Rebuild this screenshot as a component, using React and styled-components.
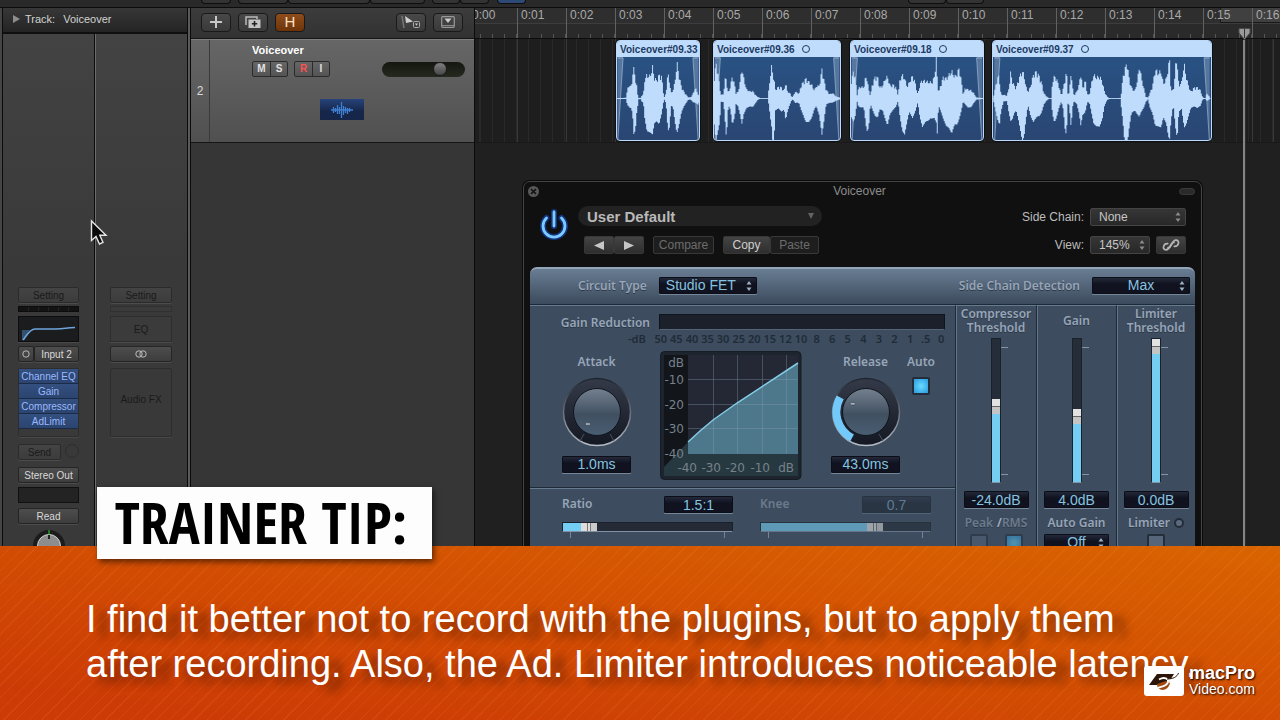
import React from "react";
import styled, { createGlobalStyle, css } from "styled-components";

const GlobalStyle = createGlobalStyle`
  *, *::before, *::after { box-sizing: border-box; }
  html, body { margin: 0; padding: 0; background: #1e1e1e; }
  body { font-family: "Liberation Sans", Arial, sans-serif; font-size: 12px; overflow: hidden; }
  button, input, select { font: inherit; color: inherit; margin: 0; padding: 0; }
  button { cursor: pointer; }
`;

const labelFont = `"Noto Sans", "Open Sans", sans-serif`;

/* ---------- page frame ---------- */

const Screen = styled.div`
  display: flex;
  flex-direction: column;
  height: 100vh;
  overflow: hidden;
`;

const Workspace = styled.div`
  position: relative;
  flex: 1;
  min-height: 0;
  overflow: hidden;
  display: flex;
  flex-direction: column;
  background: #202020;
`;

const TopStrip = styled.div`
  display: flex;
  flex: none;
  height: 8px;
  padding-left: 201px;
  background: #292929;
  border-bottom: 1px solid #0c0c0c;
`;

const TopChip = styled.span`
  flex: none;
  width: ${(p) => p.$w}px;
  height: 4px;
  margin-left: ${(p) => p.$gap || 0}px;
  background: ${(p) => (p.$on ? "#2c4a75" : "#333")};
  border: 1px solid #0e0e0e;
  border-top: 0;
  border-radius: 0 0 4px 4px;
`;

const Panes = styled.div`
  flex: 1;
  min-height: 0;
  display: grid;
  grid-template-columns: 190px 285px 1fr;
`;

/* ---------- inspector ---------- */

const Inspector = styled.aside`
  display: flex;
  flex-direction: column;
  background: #3b3b3b;
  border-left: 2px solid #454545;
  border-right: 2px solid #5a5a5a;
  box-shadow: inset 1px 0 #0b0b0b, inset -1px 0 #0b0b0b;
`;

const InspectorHead = styled.header`
  display: flex;
  align-items: center;
  gap: 5px;
  flex: none;
  height: 26px;
  margin: 0 1px;
  padding: 0 0 2px 10px;
  font-size: 11px;
  color: #d2d2d2;
  background: linear-gradient(#373737, #242424);
  border-bottom: 2px solid #0f0f0f;
`;

const HeadName = styled.span`
  margin-left: 3px;
`;

const Strips = styled.div`
  flex: 1;
  min-height: 0;
  display: grid;
  grid-template-columns: 92px 1fr;
  margin: 0 1px;
  background: linear-gradient(#434343, #393939 45%);
`;

const Strip = styled.section`
  display: flex;
  flex-direction: column;
  min-width: 0;
  padding: 253px 15px 0;
  font-size: 10px;
  color: #d6d6d6;
  ${(p) =>
    p.$first &&
    css`
      border-right: 1px solid #0c0c0c;
      box-shadow: 1px 0 #6c6c6c;
    `}
`;

const SlotButton = styled.button`
  flex: ${(p) => (p.$grow ? 1 : "none")};
  min-width: 0;
  width: ${(p) => (p.$w ? `${p.$w}px` : "auto")};
  height: 16px;
  margin-bottom: ${(p) => p.$after || 0}px;
  padding: 0;
  line-height: 13px;
  white-space: nowrap;
  color: ${(p) => (p.$dim ? "#1a1a1a" : "#dadada")};
  background: ${(p) => (p.$dim ? "linear-gradient(#444, #3c3c3c)" : "linear-gradient(#4d4d4d, #3d3d3d)")};
  border: 1px solid ${(p) => (p.$dim ? "#2b2b2b" : "#252525")};
  border-radius: 2px;
  box-shadow: 0 1px #4c4c4c;
`;

const MeterSlot = styled.div`
  height: 6px;
  margin-bottom: 4px;
  background: ${(p) => (p.$empty ? "#3b3b3b" : "repeating-linear-gradient(90deg, #131313 0 9px, #242424 9px 10px)")};
  border: 1px solid ${(p) => (p.$empty ? "#303030" : "#0c0c0c")};
`;

const EqThumb = styled.div`
  display: grid;
  place-items: center;
  height: 26px;
  margin-bottom: 4px;
  color: #1a1a1a;
  background: ${(p) => (p.$empty ? "#3b3b3b" : "#1b1c1e")};
  border: 1px solid ${(p) => (p.$empty ? "#2e2e2e" : "#0d0d0d")};
  box-shadow: 0 1px #4a4a4a;
`;

const Row = styled.div`
  display: flex;
  gap: ${(p) => p.$gap || 0}px;
  margin-bottom: ${(p) => p.$after || 0}px;
`;

const FxStack = styled.div`
  display: flex;
  flex-direction: column;
  height: 69px;
  margin-bottom: 7px;
  padding-bottom: ${(p) => (p.$empty ? 6 : 0)}px;
  color: #1a1a1a;
  border: 1px solid #2d2d2d;
  border-radius: 2px;
  box-shadow: 0 1px #484848;
  justify-content: ${(p) => (p.$empty ? "center" : "flex-start")};
  text-align: center;
`;

const FxButton = styled.button`
  height: 15px;
  padding: 0;
  line-height: 13px;
  white-space: nowrap;
  color: #9bb9ff;
  background: linear-gradient(#34507f, #2b4470);
  border: 0;
  border-bottom: 1px solid #1b2a46;
`;

const SendKnob = styled.span`
  flex: none;
  width: 14px;
  height: 14px;
  border: 1px solid #2d2d2d;
  border-radius: 50%;
`;

const GroupSlot = styled.div`
  height: 16px;
  margin: 4px 0 5px;
  background: #232323;
  border: 1px solid #101010;
`;

const PanWrap = styled.div`
  display: flex;
  justify-content: center;
  margin-top: 5px;
`;

/* ---------- track headers ---------- */

const TrackPane = styled.section`
  display: flex;
  flex-direction: column;
  background: #363636;
  border-left: 1px solid #0b0b0b;
  border-right: 1px solid #0b0b0b;
`;

const TrackTools = styled.div`
  display: flex;
  align-items: center;
  gap: 7px;
  flex: none;
  height: 31px;
  padding: 0 11px 2px 10px;
  background: linear-gradient(#3c3c3c, #323232);
  border-bottom: 1px solid #161616;
`;

const Spring = styled.span`
  flex: 1;
`;

const ToolButton = styled.button`
  display: grid;
  place-items: center;
  width: 30px;
  height: 19px;
  padding: 0;
  color: ${(p) => (p.$on ? "#ffe0c0" : "#c8c8c8")};
  font-size: 15px;
  line-height: 16px;
  background: ${(p) => (p.$on ? "linear-gradient(#8f4d1c, #6d3408)" : "linear-gradient(#484848, #3a3a3a)")};
  border: 1px solid #191919;
  border-radius: 4px;
`;

const TrackRow = styled.div`
  display: grid;
  grid-template-columns: 19px 1fr;
  height: 104px;
  color: #eee;
  background: linear-gradient(#666, #505050);
  border-top: 1px solid #808080;
  border-bottom: 1px solid #161616;
`;

const TrackNumber = styled.span`
  display: grid;
  place-items: center;
  border-right: 1px solid #3a3a3a;
  color: #dadada;
`;

const TrackBody = styled.div`
  display: flex;
  flex-direction: column;
  padding: 4px 9px 0 42px;
`;

const TrackName = styled.strong`
  font-size: 11px;
  line-height: 13px;
  color: #fff;
`;

const TrackControls = styled.div`
  display: flex;
  align-items: center;
  gap: 6px;
  margin-top: 4px;
`;

const Segments = styled.div`
  display: flex;
  background: linear-gradient(#666, #545454);
  border: 1px solid #2b2b2b;
  border-radius: 2px;
`;

const Segment = styled.button`
  width: 17px;
  height: 14px;
  padding: 0;
  font-size: 10px;
  font-weight: bold;
  line-height: 14px;
  color: ${(p) => (p.$rec ? "#ff5050" : "#e2e2e2")};
  background: none;
  border: 0;
  & + & {
    border-left: 1px solid #2b2b2b;
  }
`;

const Volume = styled.input`
  appearance: none;
  width: 83px;
  height: 15px;
  margin-left: auto;
  background: linear-gradient(#14170f, #262920);
  border-radius: 8px;
  &::-webkit-slider-thumb {
    appearance: none;
    width: 14px;
    height: 14px;
    border: 1px solid #1c1c1c;
    border-radius: 50%;
    background: linear-gradient(#808080, #464646);
  }
`;

const TrackIcon = styled.div`
  display: grid;
  place-items: center;
  width: 44px;
  height: 21px;
  margin: 22px 0 0 68px;
  background: linear-gradient(#26437a, #16264a 60%);
`;

/* ---------- timeline ---------- */

const Timeline = styled.section`
  min-width: 0;
  overflow: hidden;
  background: #202020;
`;

const Ruler = styled.div`
  position: relative;
  isolation: isolate;
  display: flex;
  height: 31px;
  overflow: hidden;
  background: linear-gradient(#2e2e2e 0 15px, #3d3d3d 15px 16px, #2a2a2a 16px);
  border-bottom: 1px solid #0d0d0d;
`;

const CycleRange = styled.div`
  position: absolute;
  z-index: -1;
  top: 0;
  right: 0;
  width: 60px;
  height: 15px;
  background: rgba(255, 255, 255, 0.09);
  border: solid #191919;
  border-width: 0 0 1px 1px;
`;

const RulerCell = styled.span`
  flex: none;
  width: 49px;
  padding: 1px 0 0 3px;
  font-size: 12px;
  line-height: 13px;
  color: #a9a9a9;
  border-left: 1px solid #626262;
  background: repeating-linear-gradient(90deg, transparent 0 11px, #555 11px 12px) 0 100% / 48px 4px no-repeat;
  &:first-child {
    margin-left: -7px;
  }
`;

const Lane = styled.div`
  display: flex;
  height: 104px;
  padding: 1px 0;
  background:
    repeating-linear-gradient(90deg, #383838 0 1px, transparent 1px 49px) -7px 0,
    repeating-linear-gradient(90deg, #292929 0 1px, transparent 1px 12px) 5px 0,
    #1e1e1e;
  border-bottom: 1px solid #191919;
`;

const Region = styled.article`
  flex: none;
  display: flex;
  flex-direction: column;
  width: ${(p) => p.$w}px;
  margin-left: ${(p) => p.$gap}px;
  overflow: hidden;
  background: linear-gradient(#285486, #2a4673);
  border: 1px solid #bcd9fa;
  border-radius: 4px;
  box-shadow: 0 0 0 1px #0d0f14;
`;

const RegionHead = styled.header`
  display: flex;
  align-items: center;
  gap: 7px;
  flex: none;
  height: 16px;
  padding-left: 3px;
  font-size: 10px;
  font-weight: bold;
  color: #1d3a63;
  white-space: nowrap;
  background: #bfdcfc;
`;

const LoopMark = styled.span`
  width: 8px;
  height: 8px;
  border: 1px solid #1d3a63;
  border-radius: 50%;
`;

const Playhead = styled.div`
  position: absolute;
  top: 28px;
  bottom: 0;
  left: 1238px;
  width: 13px;
  svg {
    display: block;
    width: 13px;
    height: 12px;
  }
  &::after {
    content: "";
    display: block;
    width: 3px;
    height: 100%;
    margin: 0 5px;
    background: #858585;
    border: solid #2c2c2c;
    border-width: 0 1px 0 0;
  }
`;

const Pointer = styled.svg`
  position: absolute;
  top: 219px;
  left: 90px;
`;

/* ---------- plug-in window ---------- */

const PluginWindow = styled.section`
  position: absolute;
  top: 181px;
  left: 523px;
  width: 679px;
  padding: 0 6px;
  background: #101010;
  border: 1px solid #444;
  border-radius: 7px 7px 0 0;
  box-shadow: 0 0 0 1px #0b0b0b;
`;

const TitleBar = styled.header`
  display: grid;
  grid-template-columns: 16px 1fr 16px;
  align-items: center;
  height: 18px;
  color: #8c8c8c;
  text-align: center;
`;

const WindowTitle = styled.span`
  padding-right: 6px;
`;

const CloseButton = styled.button`
  display: grid;
  place-items: center;
  width: 11px;
  height: 11px;
  margin-left: -2px;
  padding: 0;
  background: #595959;
  border: 0;
  border-radius: 50%;
`;

const Pill = styled.span`
  height: 7px;
  background: #2a2a2a;
  border: 1px solid #3a3a3a;
  border-radius: 4px;
`;

const PluginHead = styled.div`
  display: flex;
  height: 67px;
  padding: 6px 9px 0 9px;
`;

const PowerButton = styled.button`
  width: 32px;
  height: 36px;
  margin-right: 7px;
  padding: 0;
  background: none;
  border: 0;
  svg {
    display: block;
    margin-left: -1px;
  }
`;

const HeadColumn = styled.div`
  display: flex;
  flex-direction: column;
  gap: ${(p) => p.$gap}px;
  padding-top: ${(p) => p.$top || 0}px;
  margin-left: ${(p) => (p.$right ? "auto" : "0")};
`;

const SelectWrap = styled.div`
  position: relative;
  width: ${(p) => p.$w}px;
  svg {
    position: absolute;
    top: 50%;
    right: ${(p) => p.$inset || 5}px;
    transform: translateY(-50%);
    pointer-events: none;
  }
`;

const PresetSelect = styled.select`
  appearance: none;
  display: block;
  width: 100%;
  height: 20px;
  padding: 0 9px;
  font-size: 15px;
  font-weight: bold;
  color: #b9b9b9;
  background: #222;
  border: 0;
  border-radius: 10px;
`;

const ButtonRow = styled.div`
  display: flex;
  padding-left: 6px;
  gap: 9px;
`;

const Joined = styled.div`
  display: flex;
`;

const HeadButton = styled.button`
  display: grid;
  place-items: center;
  width: ${(p) => p.$w}px;
  height: 18px;
  padding: 0;
  line-height: 15px;
  color: ${(p) => (p.$dim ? "#6c6c6c" : "#cfcfcf")};
  background: ${(p) => (p.$dim ? "#1e1e1e" : "linear-gradient(#444, #2e2e2e)")};
  border: 1px solid #383838;
  border-radius: 2px;
`;

const Field = styled.div`
  display: flex;
  align-items: center;
  gap: 6px;
  color: #bdbdbd;
  label {
    width: 62px;
    text-align: right;
    white-space: nowrap;
  }
`;

const HeadSelect = styled.select`
  appearance: none;
  display: block;
  width: 100%;
  height: 18px;
  padding: 0 8px;
  color: #c6c6c6;
  background: linear-gradient(#363636, #282828);
  border: 1px solid #444;
  border-radius: 2px;
`;

const Body = styled.div`
  color: #97a5b8;
  font-family: ${labelFont};
  font-weight: 600;
  font-size: 12px;
  background: linear-gradient(#697d93, #3d4c5e 34px);
  border-top: 2px solid #93a5b8;
  border-radius: 7px 7px 0 0;
`;

const BodyTop = styled.div`
  display: flex;
  align-items: center;
  height: 36px;
  padding: 0 5px 2px 48px;
  gap: 12px;
  border-bottom: 1px solid #1d2a38;
  text-shadow: 0 1px #2d3947;
`;

const readout = css`
  font-family: "Liberation Sans", Arial, sans-serif;
  font-weight: normal;
  font-size: 14px;
  color: #86c3e0;
  background: linear-gradient(#23283a, #10131f 40%);
  border: 1px solid #0b0e16;
  border-radius: 1px;
  box-shadow: 0 1px #76869a;
`;

const BodySelect = styled.select`
  ${readout}
  appearance: none;
  display: block;
  width: 100%;
  height: 17px;
  padding: 0 ${(p) => (p.$center ? 12 : 6)}px;
  line-height: 15px;
  text-align-last: ${(p) => (p.$center ? "center" : "left")};
`;

const Readout = styled.input`
  ${readout}
  display: block;
  width: ${(p) => p.$w || 69}px;
  height: 17px;
  text-align: center;
  opacity: ${(p) => (p.$dim ? 0.4 : 1)};
`;

const Controls = styled.div`
  display: grid;
  grid-template-columns: 425px 81px 80px 1fr;
  height: 320px;
`;

const Main = styled.div`
  display: flex;
  flex-direction: column;
  border-top: 1px solid #667b90;
`;

const MeterRow = styled.div`
  display: flex;
  align-items: flex-start;
  justify-content: flex-end;
  gap: 9px;
  padding: 8px 10px 0 0;
  line-height: 17px;
  text-shadow: 0 1px #2d3947;
`;

const Meter = styled.div`
  width: 286px;
  height: 16px;
  background: #1b202b;
  border: 1px solid #10151d;
  border-bottom-color: #536478;
`;

const Scale = styled.div`
  display: grid;
  grid-template-columns: 25px repeat(19, 1fr);
  padding: 0 6px 0 98px;
  font-size: 11px;
  line-height: 16px;
  color: #202b38;
  text-align: center;
  white-space: nowrap;
  span:first-child {
    text-align: left;
  }
`;

const Dials = styled.div`
  display: grid;
  grid-template-columns: 97px 142px 97px 1fr;
  column-gap: 15px;
  height: 141px;
  padding: 4px 0 0 18px;
  border-bottom: 1px solid #1f2b38;
`;

const Dial = styled.div`
  display: flex;
  flex-direction: column;
  align-items: center;
  margin-top: 2px;
  line-height: 17px;
  svg {
    margin: 7px 0 9px;
  }
`;

const CheckBox = styled.input`
  appearance: none;
  display: block;
  width: 18px;
  height: 18px;
  background: #56657a;
  border: 2px solid #242d3a;
  border-radius: 2px;
  opacity: ${(p) => (p.$dim ? 0.5 : 1)};
  &:checked {
    background: radial-gradient(#69dcff, #2a98df);
  }
`;

const AutoBox = styled.div`
  display: flex;
  flex-direction: column;
  align-items: center;
  gap: 7px;
  width: 40px;
  margin: 2px 0 0 -28px;
  line-height: 17px;
`;

const LowRow = styled.div`
  display: grid;
  grid-template-columns: 171px 171px;
  column-gap: 27px;
  padding: 7px 0 0 32px;
  border-top: 1px solid #667b90;
`;

const LowControl = styled.div`
  color: ${(p) => (p.$dim ? "#6b7a8d" : "#97a5b8")};
`;

const LowHead = styled.div`
  display: flex;
  justify-content: space-between;
  line-height: 16px;
  margin-bottom: 9px;
`;

const HSlider = styled.input`
  appearance: none;
  display: block;
  width: 171px;
  height: 10px;
  opacity: ${(p) => (p.$dim ? 0.6 : 1)};
  background: linear-gradient(90deg, #74cdf3 ${(p) => p.$fill}%, #242b37 ${(p) => p.$fill}%);
  border: 1px solid #1a212c;
  border-bottom-color: #8190a2;
  &::-webkit-slider-thumb {
    appearance: none;
    width: 16px;
    height: 8px;
    background: linear-gradient(90deg, #ddd 6px, #777 6px 7px, #ddd 7px 9px, #777 9px 10px, #ccc 10px);
  }
`;

const Ticks = styled.div`
  height: 6px;
  margin: 0 8px;
  border: solid #76869a;
  border-width: 0 1px;
`;

const Column = styled.div`
  display: flex;
  flex-direction: column;
  align-items: center;
  border-left: 1px solid #1e2a37;
  border-top: 1px solid #667b90;
  box-shadow: inset 1px 0 #62768b;
  text-shadow: 0 1px #2d3947;
`;

const ColumnTitle = styled.label`
  display: grid;
  place-items: center;
  height: 30px;
  line-height: 14px;
  text-align: center;
`;

const FaderWrap = styled.div`
  width: 24px;
  height: 146px;
  margin: 2px 0 7px;
  padding: 0 7px;
  background: linear-gradient(#8494a7, #8494a7) 100% 9px / 8px 1px no-repeat,
    linear-gradient(#8494a7, #8494a7) 100% 136px / 8px 1px no-repeat;
`;

const Fader = styled.input`
  appearance: none;
  writing-mode: vertical-lr;
  direction: rtl;
  display: block;
  width: 10px;
  height: 145px;
  background: linear-gradient(0deg, #74cdf3 ${(p) => p.$fill}%, #252d38 ${(p) => p.$fill}%);
  border: 1px solid #19212c;
  border-bottom-color: #8494a7;
  &::-webkit-slider-thumb {
    appearance: none;
    width: 8px;
    height: 15px;
    background: linear-gradient(#e2e2e2 7px, #666 7px 8px, #c4c4c4 8px);
  }
`;

const FootLabel = styled.div`
  display: flex;
  align-items: center;
  gap: 4px;
  margin-top: 5px;
  line-height: 20px;
  white-space: nowrap;
  color: ${(p) => (p.$dim ? "#6c7b8f" : "#97a5b8")};
  b {
    margin-right: -4px;
    font-weight: 600;
    color: #a8b4c4;
  }
`;

const Lamp = styled.span`
  width: 10px;
  height: 10px;
  background: #5b6a7e;
  border: 2px solid #232c39;
  border-radius: 50%;
`;

const FootRow = styled.div`
  display: flex;
  gap: 17px;
  margin-top: 1px;
`;

/* ---------- tip banner ---------- */

const Banner = styled.footer`
  position: relative;
  flex: none;
  min-height: 174px;
  padding: 51px 86px 0;
  color: #fff;
  background:
    repeating-linear-gradient(135deg, transparent 0 8px, rgba(255, 150, 60, 0.13) 8px 9px),
    linear-gradient(to bottom left, rgba(218, 102, 0, 0.95), rgba(204, 55, 5, 0) 90%),
    #cc3b05;
`;

const TipTag = styled.h1`
  position: absolute;
  top: -59px;
  left: 97px;
  width: 335px;
  height: 72px;
  margin: 0;
  padding-right: 7px;
  font-family: "Open Sans Condensed", "Liberation Sans Narrow", "Liberation Sans", sans-serif;
  font-size: 58px;
  font-weight: bold;
  line-height: 70px;
  text-align: center;
  white-space: nowrap;
  color: #000;
  background: #fdfdfd;
  box-shadow: 2px 3px 6px rgba(0, 0, 0, 0.55);
`;

const TipText = styled.p`
  margin: 0;
  font-size: 38px;
  line-height: 45px;
  white-space: nowrap;
  text-shadow: 12px 6px 8px rgba(70, 20, 0, 0.65);
`;

const Brand = styled.a`
  position: absolute;
  right: 24px;
  bottom: 24px;
  display: flex;
  align-items: center;
  gap: 5px;
  color: #fff;
  text-decoration: none;
  text-shadow: 1px 1px 2px #000;
`;

const BrandName = styled.span`
  display: flex;
  flex-direction: column;
  width: 67px;
  font-size: 14px;
  line-height: 14px;
  strong {
    font-size: 18px;
    line-height: 17px;
  }
`;

/* ---------- data ---------- */

const regions = [
  {
    name: "Voiceover#09.33", gap: 141, width: 84, loop: false,
    env: [[0,1,1],[28,2,2],[31,25,22],[39,38,30],[44,30,30],[48,75,60],[51,82,104],[56,55,90],[60,35,40],[63,10,20],[66,2,2],[72,2,2],[76,10,10],[80,10,10],[84,52,50],[91,65,85],[98,60,88],[103,68,92],[108,86,98],[114,55,70],[121,50,68],[128,65,82],[136,60,50],[140,25,20],[143,2,2],[149,15,15],[152,55,60],[155,66,95],[160,45,80],[164,15,20],[170,22,22],[176,45,62],[182,100,90],[188,65,70],[196,32,35],[204,18,20],[216,4,4],[224,3,3],[231,14,12],[238,30,15],[246,12,20],[252,5,5]],
  },
  {
    name: "Voiceover#09.36", gap: 13, width: 128, loop: true,
    env: [[0,60,70],[5,95,118],[11,75,95],[17,30,70],[20,10,10],[28,12,12],[32,45,60],[35,66,120],[38,40,120],[41,18,40],[46,22,22],[50,40,40],[55,62,75],[62,38,50],[66,15,15],[72,18,20],[78,45,40],[84,83,65],[90,55,40],[98,25,25],[108,20,22],[118,20,24],[125,10,15],[133,4,4],[140,1,1],[163,1,1],[166,30,20],[170,60,50],[175,93,80],[178,65,122],[182,50,100],[186,25,30],[195,32,26],[205,30,35],[212,20,30],[217,48,62],[222,20,40],[230,15,18],[236,3,3],[242,10,8],[245,20,15],[252,16,12],[258,15,15],[263,35,30],[270,45,45],[278,55,62],[288,45,60],[296,38,50],[304,22,28],[310,35,20],[318,35,45],[322,50,70],[327,82,108],[332,55,80],[340,25,20],[350,12,14],[360,15,12],[370,6,6],[383,2,2]],
  },
  {
    name: "Voiceover#09.18", gap: 9, width: 134, loop: true,
    env: [[0,50,50],[7,75,65],[12,60,50],[18,10,10],[22,30,25],[30,32,30],[38,30,30],[43,58,70],[47,60,100],[53,25,85],[58,8,15],[64,40,30],[72,58,45],[80,60,50],[86,30,28],[95,35,30],[103,55,55],[110,60,75],[118,35,45],[128,38,35],[136,30,28],[142,10,8],[148,55,60],[155,65,95],[162,55,100],[170,32,60],[176,45,35],[186,62,50],[194,45,35],[202,10,10],[208,40,50],[216,50,80],[226,48,70],[236,45,72],[246,45,65],[252,60,60],[258,110,70],[261,60,100],[265,15,20],[272,40,35],[280,60,55],[288,55,70],[296,65,75],[305,75,92],[314,60,70],[322,70,75],[328,85,60],[334,50,40],[340,10,10],[346,30,20],[354,25,28],[364,22,25],[372,15,12],[380,3,3],[401,1,1]],
  },
  {
    name: "Voiceover#09.37", gap: 8, width: 220, loop: true,
    env: [[0,10,10],[8,45,45],[14,65,70],[18,45,75],[22,10,40],[30,10,10],[40,8,8],[46,30,45],[51,70,65],[56,50,60],[62,35,40],[68,30,32],[76,55,60],[86,75,108],[92,65,100],[97,35,60],[104,18,18],[112,35,50],[120,65,70],[130,75,60],[138,60,60],[145,45,45],[152,15,18],[160,6,6],[168,1,1],[174,1,1],[178,45,40],[184,62,62],[190,55,50],[198,35,25],[205,8,8],[211,30,30],[216,50,85],[221,80,110],[224,15,15],[229,15,20],[235,78,100],[239,30,30],[244,8,8],[252,20,18],[258,35,40],[264,70,75],[270,30,45],[278,50,35],[284,12,10],[290,10,10],[296,40,35],[303,65,65],[312,58,75],[322,60,80],[330,45,60],[336,20,25],[344,5,5],[352,1,1],[384,1,1],[388,20,30],[392,60,60],[398,80,120],[405,100,125],[410,60,85],[418,30,40],[428,20,35],[436,50,50],[442,92,60],[448,60,45],[455,30,30],[462,5,10],[468,3,3],[474,15,25],[482,35,40],[490,80,70],[500,70,72],[508,75,75],[515,40,50],[524,55,70],[530,90,110],[534,104,120],[538,20,70],[545,25,20],[550,60,80],[554,125,122],[558,80,110],[562,35,40],[570,45,30],[578,95,80],[584,60,70],[590,40,50],[598,18,25],[608,30,20],[618,30,25],[628,22,20],[634,3,3],[642,1,1],[647,15,8],[657,2,2]],
  },
];

const seconds = Array.from({ length: 17 }, (_, i) => `0:${String(i).padStart(2, "0")}`);
const scaleMarks = ["50", "45", "40", "35", "30", "25", "20", "15", "12", "10", "8", "6", "5", "4", "3", "2", "1", ".5", "0"];

/* Builds a stepped outline, one step per pixel column, from [x, above, below] envelope points. */
function wavePath(env) {
  const up = [];
  const down = [];
  const end = env[env.length - 1][0];
  let i = 0;
  for (let x = 0; x < end; x += 3) {
    while (env[i + 1][0] <= x) i += 1;
    const [x0, a0, b0] = env[i];
    const [x1, a1, b1] = env[i + 1];
    const t = (x - x0) / (x1 - x0);
    const jagUp = 0.88 + 0.3 * Math.abs(Math.sin(x * 12.9));
    const jagDown = 0.88 + 0.3 * Math.abs(Math.sin(x * 7.3 + 1));
    const top = 126 - (a0 + (a1 - a0) * t) * jagUp;
    const bottom = 126 + (b0 + (b1 - b0) * t) * jagDown;
    up.push(`${x},${top.toFixed(1)}L${x + 3},${top.toFixed(1)}`);
    down.unshift(`${x + 3},${bottom.toFixed(1)}L${x},${bottom.toFixed(1)}`);
  }
  return `M${up.join("L")}L${down.join("L")}Z`;
}

function Wave({ env, width }) {
  const w = width * 3;
  return (
    <svg width={width - 2} height="84" viewBox={`3 0 ${w - 6} 252`} aria-hidden="true">
      <path d={`M3 252L20 0H3ZM${w - 3} 252L${w - 20} 0H${w - 3}Z`} fill="#8ea6c4" opacity=".45" />
      <path d={`M4 252L20 3H3M${w - 4} 252L${w - 20} 3H${w - 3}`} fill="none" stroke="#a9bfd9" strokeWidth="2" />
      <path d={`M0 126H${w}`} stroke="#bfdcfc" strokeWidth="2" />
      <path d={wavePath(env)} fill="#bfdcfc" />
    </svg>
  );
}

const Chevrons = ({ color = "#8b8b8b" }) => (
  <svg width="6" height="10" viewBox="0 0 6 10" fill={color} aria-hidden="true">
    <path d="M3 0L5.5 3.5H.5ZM3 10L5.5 6.5H.5Z" />
  </svg>
);

function Knob({ angle, arc }) {
  const rad = (angle * Math.PI) / 180;
  const dx = 34.5 + 15 * Math.cos(rad);
  const dy = 34.5 + 15 * Math.sin(rad);
  return (
    <svg width="70" height="70" viewBox="0 0 70 70" aria-hidden="true">
      <defs>
        <linearGradient id="knobCap" x1="0" y1="0" x2="0" y2="1">
          <stop offset="0" stopColor="#74808f" />
          <stop offset=".45" stopColor="#4b5a6b" />
          <stop offset=".55" stopColor="#405061" />
          <stop offset="1" stopColor="#4a5e72" />
        </linearGradient>
        <linearGradient id="knobRim" x1="0" y1="0" x2="0" y2="1">
          <stop offset="0" stopColor="#1c2430" />
          <stop offset="1" stopColor="#b5bcc6" />
        </linearGradient>
        <linearGradient id="knobRing" x1="0" y1="0" x2="0" y2="1">
          <stop offset="0" stopColor="#343a48" />
          <stop offset="1" stopColor="#141822" />
        </linearGradient>
      </defs>
      <circle cx="35" cy="35" r="33.5" fill="url(#knobRing)" stroke="url(#knobRim)" strokeWidth="1.5" />
      <path d="M22 57L18 64M48 57L52 64" stroke="#4a515f" />
      {arc && <path d="M9.2 20.4A29.5 29.5 0 0 0 21 61" fill="none" stroke="#72c9fa" strokeWidth="8" />}
      <circle cx="35" cy="35" r="23.5" fill="url(#knobCap)" stroke="#10141c" />
      <rect x={dx - 2.5} y={dy - 1} width="5" height="2.5" rx="1" fill="#aab2bc" stroke="#2b3542" strokeWidth=".5" />
    </svg>
  );
}

function Graph() {
  return (
    <svg width="142" height="129" viewBox="0 0 142 129" role="img" aria-label="Compression curve">
      <rect x=".5" y=".5" width="140.5" height="128" rx="4" fill="#1d242d" stroke="#161c25" />
      <rect x="4" y="4" width="134" height="121" fill="#12161b" />
      <rect x="28" y="4" width="110" height="99" fill="#242834" />
      <path d="M4 116L28 91V103H138V125H4Z" fill="#263941" />
      <path d="M28 91L40 80L53 69L77 52L138 12V103H28Z" fill="#4d788b" />
      <path d="M53.5 4V103M77.5 4V103M102.5 4V103M126.5 4V103M28 28.5H138M28 53.5H138M28 77.5H138" stroke="#8ea6b8" strokeOpacity=".32" />
      <path d="M28 91L40 80L53 69L77 52L138 12" fill="none" stroke="#83cbe6" strokeWidth="1.5" />
      <g fill="#77818b" fontFamily="DejaVu Sans, sans-serif" fontSize="12" fontWeight="400" textAnchor="end">
        <text x="24" y="16">dB</text>
        <text x="24" y="33">-10</text>
        <text x="24" y="58">-20</text>
        <text x="24" y="82">-30</text>
        <text x="24" y="107">-40</text>
        <text x="37" y="121">-40</text>
        <text x="61" y="121">-30</text>
        <text x="85" y="121">-20</text>
        <text x="110" y="121">-10</text>
        <text x="134" y="121">dB</text>
      </g>
    </svg>
  );
}

function ChannelStrips() {
  return (
    <Strips>
      <Strip $first>
        <SlotButton $dim $after={3}>Setting</SlotButton>
        <MeterSlot />
        <EqThumb>
          <svg width="57" height="24" viewBox="0 0 57 24" aria-hidden="true">
            <path d="M2 13H10L4 23H2Z" fill="#33506c" />
            <path d="M3 23C7 18 10 12 15 12H36C45 12 46 10.5 55 10.5" fill="none" stroke="#6fa5dc" strokeWidth="1.6" />
          </svg>
        </EqThumb>
        <Row $after={6}>
          <SlotButton $w={16} aria-label="Input format">
            <svg width="8" height="8" viewBox="0 0 8 8" aria-hidden="true"><circle cx="4" cy="4" r="3.2" fill="none" stroke="#bbb" /></svg>
          </SlotButton>
          <SlotButton $grow>Input 2</SlotButton>
        </Row>
        <FxStack>
          {["Channel EQ", "Gain", "Compressor", "AdLimit"].map((n) => (
            <FxButton key={n}>{n}</FxButton>
          ))}
        </FxStack>
        <Row $gap={4} $after={7}>
          <SlotButton $dim $grow>Send</SlotButton>
          <SendKnob />
        </Row>
        <SlotButton>Stereo Out</SlotButton>
        <GroupSlot />
        <SlotButton>Read</SlotButton>
        <PanWrap>
          <svg width="34" height="34" viewBox="0 0 34 34" aria-hidden="true">
            <circle cx="17" cy="17" r="16" fill="#1b1b1b" />
            <circle cx="17" cy="17" r="11.5" fill="#8d8d8d" stroke="#d0d0d0" />
            <path d="M17 1V6" stroke="#35d335" />
            <path d="M17 6V10" stroke="#222" strokeWidth="2" />
          </svg>
        </PanWrap>
      </Strip>
      <Strip>
        <SlotButton $dim $after={3}>Setting</SlotButton>
        <MeterSlot $empty />
        <EqThumb $empty>EQ</EqThumb>
        <SlotButton $after={6} aria-label="Stereo format">
          <svg width="12" height="8" viewBox="0 0 12 8" fill="none" stroke="#bbb" aria-hidden="true">
            <circle cx="4" cy="4" r="3.2" />
            <circle cx="8" cy="4" r="3.2" />
          </svg>
        </SlotButton>
        <FxStack $empty>Audio FX</FxStack>
      </Strip>
    </Strips>
  );
}

function TrackHeaders() {
  return (
    <TrackPane>
      <TrackTools>
        <ToolButton aria-label="Add track">
          <svg width="12" height="12" viewBox="0 0 12 12" aria-hidden="true"><path d="M6 0V12M0 6H12" stroke="#c8c8c8" strokeWidth="2" /></svg>
        </ToolButton>
        <ToolButton aria-label="Duplicate track">
          <svg width="16" height="12" viewBox="0 0 16 12" aria-hidden="true">
            <path d="M1 9V1H12V3" fill="none" stroke="#bbb" strokeWidth="1.5" />
            <rect x="3.5" y="3.5" width="12" height="8.5" fill="#c4c4c4" />
            <path d="M9.5 5V10.5M6.8 7.8H12.2" stroke="#222" strokeWidth="1.6" />
          </svg>
        </ToolButton>
        <ToolButton $on>H</ToolButton>
        <Spring />
        <ToolButton aria-label="Catch and automation">
          <svg width="20" height="12" viewBox="0 0 20 12" aria-hidden="true">
            <path d="M1 0L3 12" stroke="#777" strokeWidth="1.5" />
            <path d="M4 0L12 5.5L5 7Z" fill="#d0d0d0" />
            <rect x="12.5" y="5.5" width="6" height="6" rx="1" fill="none" stroke="#aaa" />
            <path d="M14 7.5H17L15.5 9.7Z" fill="#ccc" />
          </svg>
        </ToolButton>
        <ToolButton aria-label="Track header options">
          <svg width="14" height="12" viewBox="0 0 14 12" aria-hidden="true">
            <rect x=".7" y=".7" width="12.6" height="10.6" rx="1" fill="none" stroke="#999" strokeWidth="1.2" />
            <path d="M3.5 2.5H10.5L7 7Z" fill="#ccc" />
            <path d="M1 9.5H13" stroke="#888" />
          </svg>
        </ToolButton>
      </TrackTools>
      <TrackRow>
        <TrackNumber>2</TrackNumber>
        <TrackBody>
          <TrackName>Voiceover</TrackName>
          <TrackControls>
            <Segments>
              <Segment>M</Segment>
              <Segment>S</Segment>
            </Segments>
            <Segments>
              <Segment $rec>R</Segment>
              <Segment>I</Segment>
            </Segments>
            <Volume type="range" aria-label="Track volume" defaultValue="74" />
          </TrackControls>
          <TrackIcon>
            <svg width="22" height="18" viewBox="0 0 22 18" aria-hidden="true">
              <path d="M0 9H22M2.5 6V12M4.5 7V11M6.5 4V13M8.5 6V13M10.5 1V17M12.5 5V14M14.5 6V12M16.5 7V13M18.5 7V11" stroke="#3f7fd0" strokeWidth="1.3" />
            </svg>
          </TrackIcon>
        </TrackBody>
      </TrackRow>
    </TrackPane>
  );
}

function Compressor() {
  return (
    <PluginWindow aria-label="Compressor">
      <TitleBar>
        <CloseButton aria-label="Close">
          <svg width="7" height="7" viewBox="0 0 7 7" aria-hidden="true"><path d="M1 1L6 6M6 1L1 6" stroke="#111" strokeWidth="1.6" /></svg>
        </CloseButton>
        <WindowTitle>Voiceover</WindowTitle>
        <Pill />
      </TitleBar>
      <PluginHead>
        <PowerButton aria-label="Bypass">
          <svg width="32" height="36" viewBox="0 0 32 36" fill="none" strokeLinecap="round" aria-hidden="true">
            <g stroke="#1451d8" strokeWidth="6" opacity=".55"><path d="M8.5 12A11 11 0 1 0 23.5 12M16 6V20" /></g>
            <g stroke="#7ccbff" strokeWidth="2.8"><path d="M8.5 12A11 11 0 1 0 23.5 12M16 6V20" /></g>
          </svg>
        </PowerButton>
        <HeadColumn $gap={10}>
          <SelectWrap $w={244} $inset={7}>
            <PresetSelect aria-label="Preset"><option>User Default</option></PresetSelect>
            <svg width="8" height="6" viewBox="0 0 8 6" aria-hidden="true"><path d="M1 0H7L4 6Z" fill="#636363" /></svg>
          </SelectWrap>
          <ButtonRow>
            <Joined>
              <HeadButton $w={30} aria-label="Previous"><svg width="10" height="9" viewBox="0 0 10 9" aria-hidden="true"><path d="M10 0V9L0 4.5Z" fill="#c6c6c6" /></svg></HeadButton>
              <HeadButton $w={30} aria-label="Next"><svg width="10" height="9" viewBox="0 0 10 9" aria-hidden="true"><path d="M0 0V9L10 4.5Z" fill="#c6c6c6" /></svg></HeadButton>
            </Joined>
            <HeadButton $w={61} $dim>Compare</HeadButton>
            <Joined>
              <HeadButton $w={47}>Copy</HeadButton>
              <HeadButton $w={49} $dim>Paste</HeadButton>
            </Joined>
          </ButtonRow>
        </HeadColumn>
        <HeadColumn $gap={10} $top={2} $right>
          <Field>
            <label htmlFor="sidechain">Side Chain:</label>
            <SelectWrap $w={96}>
              <HeadSelect id="sidechain"><option>None</option></HeadSelect>
              <Chevrons />
            </SelectWrap>
          </Field>
          <Field>
            <label htmlFor="view">View:</label>
            <SelectWrap $w={60}>
              <HeadSelect id="view"><option>145%</option></HeadSelect>
              <Chevrons />
            </SelectWrap>
            <HeadButton $w={30} aria-label="Link">
              <svg width="18" height="12" viewBox="0 0 18 12" fill="none" stroke="#b5b5b5" strokeWidth="1.7" strokeLinecap="round" aria-hidden="true">
                <path d="M6 8.5C7.5 9 8.5 7.5 9.5 5.5C10.7 3 12 1.2 14 1.2C16 1.2 17 2.7 16.4 4.5C15.8 6.5 14.2 7.5 12.3 7.3" />
                <path d="M12 3.5C10.5 3 9.5 4.5 8.5 6.5C7.3 9 6 10.8 4 10.8C2 10.8 1 9.3 1.6 7.5C2.2 5.5 3.8 4.5 5.7 4.7" />
              </svg>
            </HeadButton>
          </Field>
        </HeadColumn>
      </PluginHead>
      <Body>
        <BodyTop>
          <label htmlFor="circuit">Circuit Type</label>
          <SelectWrap $w={98}>
            <BodySelect id="circuit"><option>Studio FET</option></BodySelect>
            <Chevrons color="#9db1c4" />
          </SelectWrap>
          <Spring />
          <label htmlFor="detection">Side Chain Detection</label>
          <SelectWrap $w={98}>
            <BodySelect id="detection" $center><option>Max</option></BodySelect>
            <Chevrons color="#9db1c4" />
          </SelectWrap>
        </BodyTop>
        <Controls>
          <Main>
            <MeterRow>
              <span>Gain Reduction</span>
              <Meter />
            </MeterRow>
            <Scale>
              <span>-dB</span>
              {scaleMarks.map((m) => <span key={m}>{m}</span>)}
            </Scale>
            <Dials>
              <Dial>
                <label htmlFor="attack">Attack</label>
                <Knob angle={125} />
                <Readout id="attack" defaultValue="1.0ms" />
              </Dial>
              <Graph />
              <Dial>
                <label htmlFor="release">Release</label>
                <Knob angle={212} arc />
                <Readout id="release" defaultValue="43.0ms" />
              </Dial>
              <AutoBox>
                <label htmlFor="auto">Auto</label>
                <CheckBox id="auto" type="checkbox" defaultChecked />
              </AutoBox>
            </Dials>
            <LowRow>
              <LowControl>
                <LowHead>
                  <label htmlFor="ratio">Ratio</label>
                  <Readout id="ratio" defaultValue="1.5:1" />
                </LowHead>
                <HSlider type="range" aria-label="Ratio" defaultValue="12" $fill={16} />
                <Ticks />
              </LowControl>
              <LowControl $dim>
                <LowHead>
                  <label htmlFor="knee">Knee</label>
                  <Readout id="knee" defaultValue="0.7" $dim />
                </LowHead>
                <HSlider type="range" aria-label="Knee" defaultValue="69" $fill={68} $dim />
                <Ticks />
              </LowControl>
            </LowRow>
          </Main>
          <Column>
            <ColumnTitle htmlFor="threshold">Compressor<br />Threshold</ColumnTitle>
            <FaderWrap><Fader id="threshold" type="range" defaultValue="53" $fill={52} /></FaderWrap>
            <Readout $w={65} aria-label="Compressor threshold value" defaultValue="-24.0dB" />
            <FootLabel $dim>Peak <b>/</b>RMS</FootLabel>
            <FootRow>
              <CheckBox type="checkbox" aria-label="Peak" $dim />
              <CheckBox type="checkbox" aria-label="RMS" defaultChecked $dim />
            </FootRow>
          </Column>
          <Column>
            <ColumnTitle htmlFor="gain">Gain</ColumnTitle>
            <FaderWrap><Fader id="gain" type="range" defaultValue="45" $fill={45} /></FaderWrap>
            <Readout $w={65} aria-label="Gain value" defaultValue="4.0dB" />
            <FootLabel as="label" htmlFor="autogain">Auto Gain</FootLabel>
            <FootRow>
              <SelectWrap $w={65}>
                <BodySelect id="autogain" $center><option>Off</option></BodySelect>
                <Chevrons color="#9db1c4" />
              </SelectWrap>
            </FootRow>
          </Column>
          <Column>
            <ColumnTitle htmlFor="limit">Limiter<br />Threshold</ColumnTitle>
            <FaderWrap><Fader id="limit" type="range" defaultValue="100" $fill={95} /></FaderWrap>
            <Readout $w={65} aria-label="Limiter threshold value" defaultValue="0.0dB" />
            <FootLabel as="label" htmlFor="limiter">Limiter <Lamp /></FootLabel>
            <FootRow><CheckBox id="limiter" type="checkbox" /></FootRow>
          </Column>
        </Controls>
      </Body>
    </PluginWindow>
  );
}

export default function App() {
  return (
    <Screen>
      <GlobalStyle />
      <Workspace>
        <TopStrip>
          <TopChip $w={30} />
          <TopChip $w={50} $gap={7} />
          <TopChip $w={82} />
          <TopChip $w={55} />
          <TopChip $w={28} $gap={7} />
          <TopChip $w={29} />
          <TopChip $w={29} $gap={8} $on />
          <TopChip $w={38} $gap={382} />
          <TopChip $w={38} />
        </TopStrip>
        <Panes>
          <Inspector>
            <InspectorHead>
              <svg width="7" height="8" viewBox="0 0 7 8" aria-hidden="true"><path d="M0 0L7 4L0 8Z" fill="#8d8d8d" /></svg>
              <span>Track:</span>
              <HeadName>Voiceover</HeadName>
            </InspectorHead>
            <ChannelStrips />
          </Inspector>
          <TrackHeaders />
          <Timeline>
            <Ruler>
              {seconds.map((s) => <RulerCell key={s}>{s}</RulerCell>)}
              <CycleRange />
            </Ruler>
            <Lane>
              {regions.map((r) => (
                <Region key={r.name} $w={r.width} $gap={r.gap}>
                  <RegionHead>
                    {r.name}
                    {r.loop && <LoopMark />}
                  </RegionHead>
                  <Wave env={r.env} width={r.width} />
                </Region>
              ))}
            </Lane>
          </Timeline>
        </Panes>
        <Playhead>
          <svg viewBox="0 0 13 12" aria-hidden="true"><path d="M1 .5H12V5L6.5 11.5L1 5Z" fill="#9a9a9a" stroke="#4a4a4a" /><path d="M6.5 1V10" stroke="#333" /></svg>
        </Playhead>
        <Compressor />
        <Pointer width="18" height="28" viewBox="0 0 18 28" aria-hidden="true">
          <path d="M1.5 2V21.5L6 17.5L9.5 25L13 23.4L9.8 16.2H16Z" fill="#0a0a0a" stroke="#e4e4e4" strokeWidth="1.4" />
        </Pointer>
      </Workspace>
      <Banner>
        <TipTag>TRAINER TIP:</TipTag>
        <TipText>
          I find it better not to record with the plugins, but to apply them
          <br />
          after recording. Also, the Ad. Limiter introduces noticeable latency.
        </TipText>
        <Brand href="#macprovideo" aria-label="macProVideo.com">
          <svg width="40" height="30" viewBox="0 0 40 30" aria-hidden="true">
            <rect width="40" height="30" rx="3" fill="#fff" />
            <path d="M13 8H30L23 19H5Z" fill="#2b1408" />
            <path d="M13 18C13 26 24 26 26 17L22 15Z" fill="#a04a10" />
            <path d="M15 13.5C20 10.5 25 12.5 24 16C23 20.5 17 20.5 14 22" fill="none" stroke="#fff" strokeWidth="1.8" />
            <path d="M23 14.5C29 14 33 12 35 7" fill="none" stroke="#fff" strokeWidth="2.4" />
            <path d="M23 13C29 13 33 11 34.5 7" fill="none" stroke="#2b1408" />
          </svg>
          <BrandName><strong>macPro</strong>Video.com</BrandName>
        </Brand>
      </Banner>
    </Screen>
  );
}
